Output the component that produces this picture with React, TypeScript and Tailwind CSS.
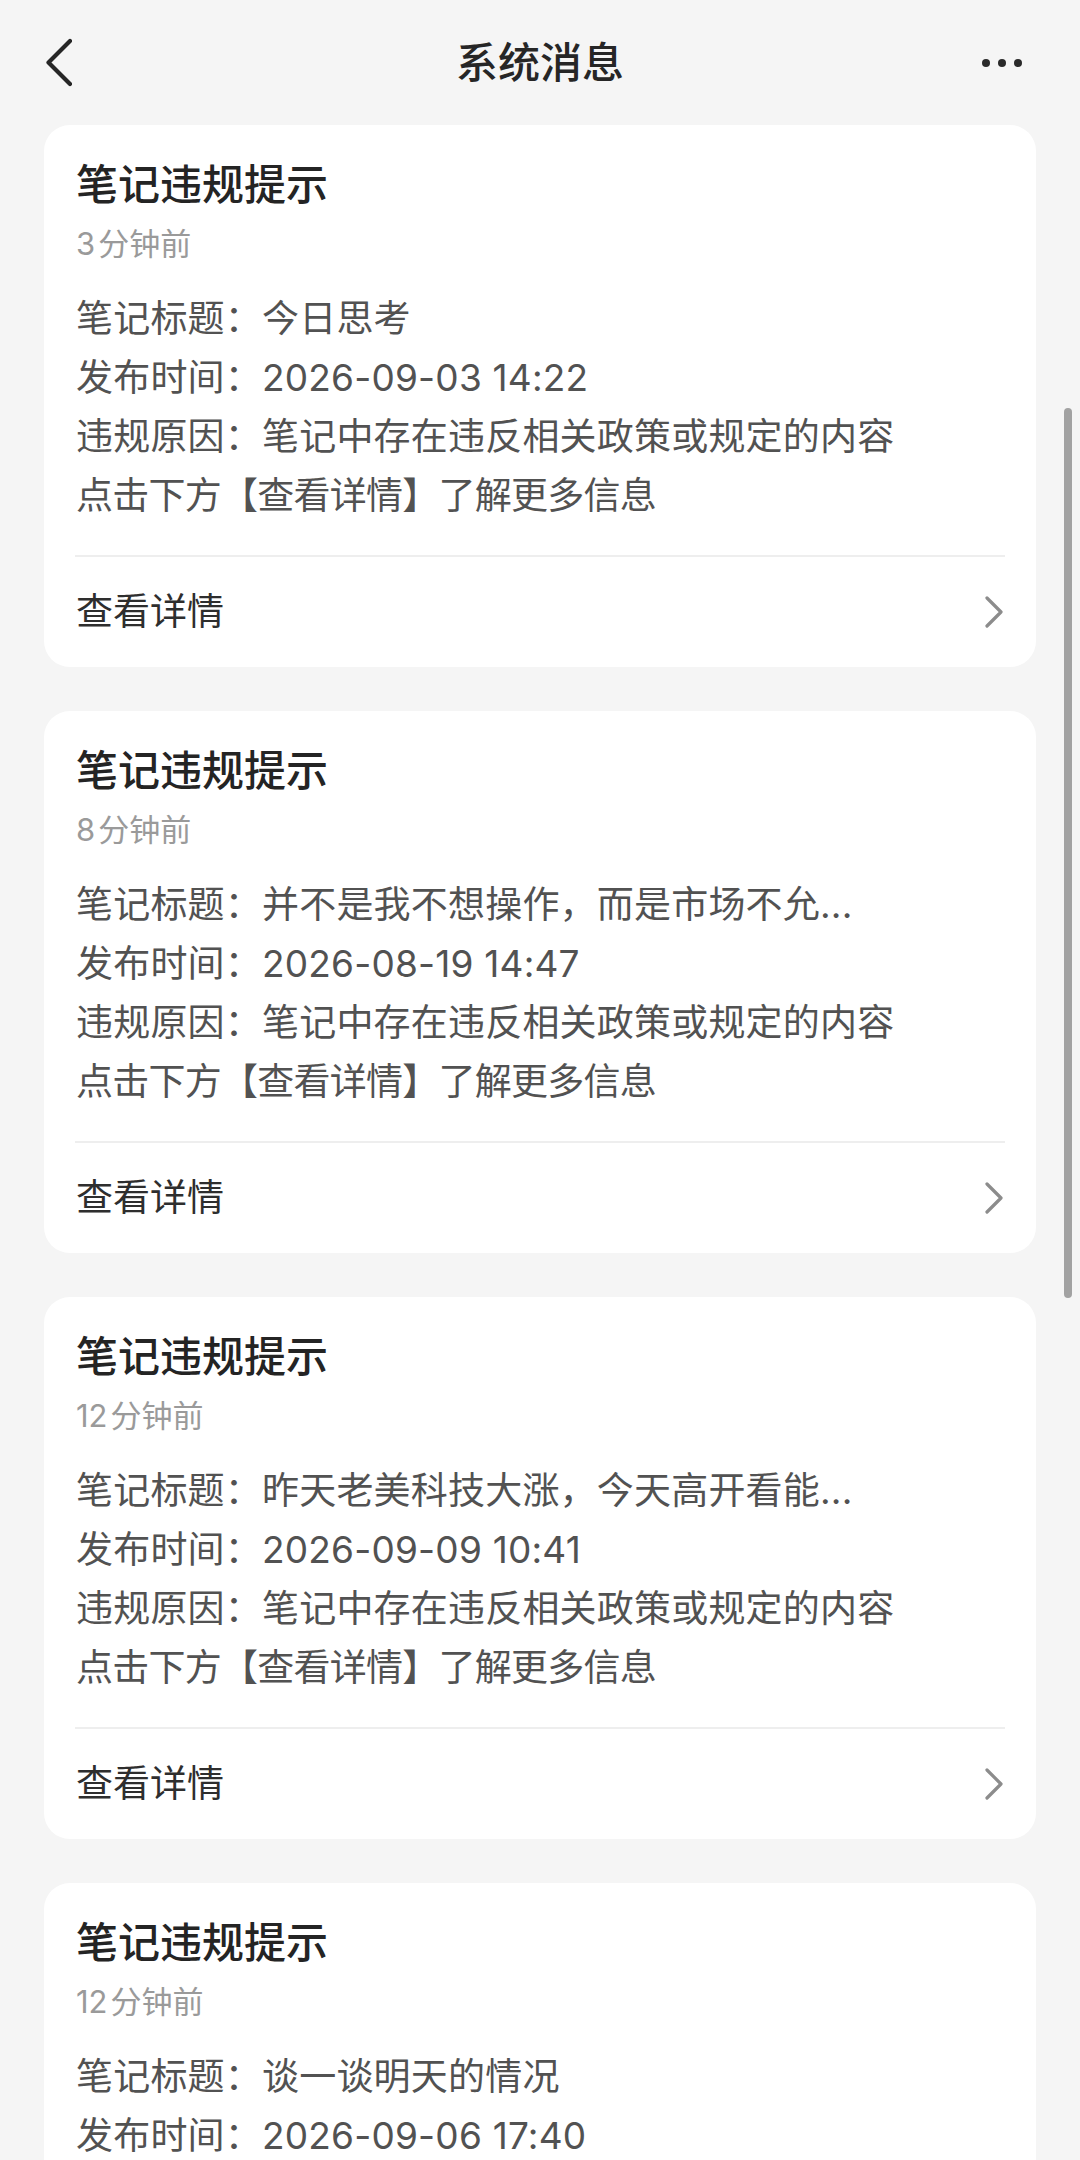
import React from "react";

type Msg = { time: string; title: string; date: string };

const msgs: Msg[] = [
  { time: "3分钟前", title: "今日思考", date: "2026-09-03 14:22" },
  { time: "8分钟前", title: "并不是我不想操作，而是市场不允...", date: "2026-08-19 14:47" },
  { time: "12分钟前", title: "昨天老美科技大涨，今天高开看能...", date: "2026-09-09 10:41" },
  { time: "12分钟前", title: "谈一谈明天的情况", date: "2026-09-06 17:40" },
];

const FONT = '"Inter", "Noto Sans CJK SC", "Noto Sans", sans-serif';

function Card({ m }: { m: Msg }) {
  const num = m.time.replace("分钟前", "");
  return (
    <div className="bg-white rounded-[26px] flex flex-col">
      <div className="px-[32px] pt-[31px]">
        <div className="text-[42px] leading-[58px] font-medium text-[#242424]">笔记违规提示</div>
        <div className="mt-[10px] text-[31px] leading-[40px] text-[#9a9a9a]">
          <span className="mr-[3px]">{num}</span>分钟前
        </div>
        <div className="mt-[25px] text-[37px] leading-[59px] text-[#525252] tracking-[0.2px]">
          <div>笔记标题：{m.title}</div>
          <div>发布时间：{m.date}</div>
          <div>违规原因：笔记中存在违反相关政策或规定的内容</div>
          <div className="tracking-[-0.75px]">点击下方【查看详情】了解更多信息</div>
        </div>
      </div>
      <div className="mx-[31px] mt-[30px] h-[2px] bg-[#eeeeee]" />
      <div className="h-[110px] px-[32px] flex items-center justify-between">
        <span className="text-[37px] text-[#2e2e2e]">查看详情</span>
        <svg width="20" height="32" viewBox="0 0 20 32" fill="none">
          <path d="M3 2 L17 16 L3 30" stroke="#8c8c8c" strokeWidth="3.2" strokeLinecap="round" strokeLinejoin="round" />
        </svg>
      </div>
    </div>
  );
}

export default function App() {
  return (
    <div className="relative w-[1080px] h-[2160px] overflow-hidden bg-[#f5f5f5]" style={{ fontFamily: FONT }}>
      <div className="h-[125px] grid grid-cols-[1fr_auto_1fr] items-center">
        <div className="pl-[44px] flex items-center">
          <svg width="28" height="50" viewBox="0 0 28 50" fill="none">
            <path d="M26 3 L4.5 24.5 L26 46" stroke="#262626" strokeWidth="4.2" strokeLinecap="round" strokeLinejoin="round" />
          </svg>
        </div>
        <div className="text-[42px] leading-[58px] font-medium text-[#262626]">系统消息</div>
        <div className="pr-[58px] flex items-center justify-end gap-[8px]">
          <div className="w-[8px] h-[8px] rounded-full bg-[#2a2a2a]" />
          <div className="w-[8px] h-[8px] rounded-full bg-[#2a2a2a]" />
          <div className="w-[8px] h-[8px] rounded-full bg-[#2a2a2a]" />
        </div>
      </div>
      <div className="px-[44px] flex flex-col gap-[44px]">
        {msgs.map((m, i) => (
          <Card key={i} m={m} />
        ))}
      </div>
      <div className="absolute left-[1064px] top-[408px] w-[8px] h-[890px] rounded-full bg-[#a2a2a2]" />
    </div>
  );
}
